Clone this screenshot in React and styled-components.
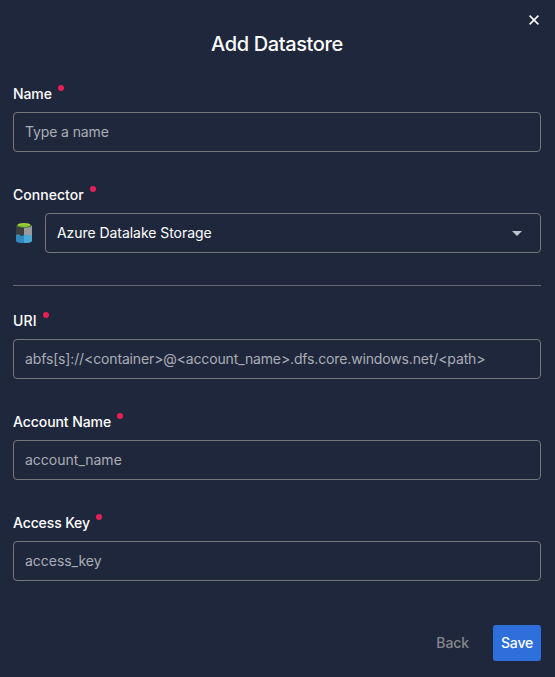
import React from "react";
import styled, { createGlobalStyle } from "styled-components";

const GlobalStyle = createGlobalStyle`
  *, *::before, *::after { box-sizing: border-box; }
  body { margin: 0; background: #1f273c; }
  input, button { font: inherit; letter-spacing: inherit; }
`;

const Dialog = styled.main`
  display: flex;
  flex-direction: column;
  height: 677px;
  padding: 12px 14px 16px 13px;
  background: #1f273c;
  color: #fff;
  font: 400 14px/20px Inter, sans-serif;
`;

const CloseButton = styled.button`
  display: flex;
  align-self: flex-end;
  width: 14px;
  height: 16px;
  padding: 3px 2px 3px 2px;
  border: 0;
  background: none;
  color: #fff;
`;

const Title = styled.h1`
  margin: 2px 0 0;
  height: 28px;
  font-size: 20px;
  line-height: 28px;
  font-weight: 500;
  letter-spacing: -0.38px;
  text-align: center;
`;

const Section = styled.section`
  display: flex;
  flex-direction: column;
  gap: 33px;
  margin-top: ${(p) => p.$top}px;
`;

const Field = styled.div`
  display: flex;
  flex-direction: column;
  gap: 8px;
`;

const Label = styled.label`
  display: flex;
  gap: 6px;
  height: 20px;
  font-weight: 500;
  letter-spacing: ${(p) => p.$tracking}px;
`;

const RequiredDot = styled.span`
  width: 6px;
  height: 6px;
  margin-top: 1px;
  border-radius: 50%;
  background: #e91e56;
`;

const Input = styled.input`
  width: 100%;
  height: 40px;
  padding: 0 11px 2px;
  border: 1px solid #77777a;
  border-radius: 4px;
  outline: 0;
  background: transparent;
  color: #fff;
  letter-spacing: ${(p) => p.$tracking}px;
  &::placeholder { color: #abadb5; opacity: 1; }
`;

const ConnectorRow = styled.div`
  display: flex;
  align-items: center;
  gap: 10px;
`;

const Select = styled.button`
  display: flex;
  flex: 1;
  align-items: center;
  justify-content: space-between;
  height: 40px;
  padding: 0 18px 0 11px;
  border: 1px solid #77777a;
  border-radius: 4px;
  background: transparent;
  color: #fff;
  letter-spacing: -0.05px;
`;

const Divider = styled.hr`
  width: 100%;
  height: 1px;
  margin: 32px 0 0;
  border: 0;
  background: #666a77;
`;

const Footer = styled.footer`
  display: flex;
  justify-content: flex-end;
  gap: 16px;
  margin-top: 44px;
`;

const Button = styled.button`
  height: 36px;
  padding: 0 8px;
  border: 0;
  border-radius: 3px;
  background: ${(p) => (p.$primary ? "#2f6fdb" : "transparent")};
  color: ${(p) => (p.$primary ? "#fff" : "#85878c")};
  font-weight: 500;
  letter-spacing: ${(p) => (p.$primary ? "-0.2px" : "-0.1px")};
`;

const DatalakeIcon = () => (
  <svg width="22" height="22" viewBox="0 0 22 22" aria-hidden="true">
    <path d="M3 3.5 11 5v10H3z" fill="#3c3f3f" />
    <path d="M11 5 19 3.5V15h-8z" fill="#9b9b9d" />
    <path d="M3 13q2-1.4 4 .3t4-.3v8q-8 0-8-2.3z" fill="#3289c2" />
    <path d="M11 13q2-1.4 4 0t4-.3v6q0 2.3-8 2.3z" fill="#4aaad5" />
    <ellipse cx="11" cy="3.7" rx="7.4" ry="2.3" fill="#45733d" />
    <ellipse cx="11" cy="2.9" rx="6.2" ry="1.9" fill="#a5d436" />
    <path d="M7 3.6q4-1 8 0" fill="none" stroke="#74b52d" strokeWidth="0.8" />
  </svg>
);

const RequiredField = ({ label, id, tracking = -0.03, children }) => (
  <Field>
    <Label htmlFor={id} $tracking={tracking}>{label}<RequiredDot /></Label>
    {children}
  </Field>
);

const TextField = ({ label, id, placeholder, tracking, labelTracking }) => (
  <RequiredField label={label} id={id} tracking={labelTracking}>
    <Input id={id} placeholder={placeholder} $tracking={tracking} />
  </RequiredField>
);

export default function App() {
  return (
    <>
      <GlobalStyle />
      <Dialog>
        <CloseButton aria-label="Close">
          <svg width="10" height="10" viewBox="0 0 10 10">
            <path d="M.6.6 9.4 9.4M9.4.6.6 9.4" stroke="currentColor" strokeWidth="1.5" />
          </svg>
        </CloseButton>
        <Title>Add Datastore</Title>
        <Section $top={26}>
          <TextField id="name" label="Name" labelTracking={-0.1} placeholder="Type a name" tracking={-0.12} />
          <RequiredField id="connector" label="Connector" tracking={0.03}>
            <ConnectorRow>
              <DatalakeIcon />
              <Select id="connector">
                Azure Datalake Storage
                <svg width="10" height="5" viewBox="0 0 10 5"><path d="M0 0h10L5 5z" fill="#c0c3c9" /></svg>
              </Select>
            </ConnectorRow>
          </RequiredField>
        </Section>
        <Divider />
        <Section $top={25}>
          <TextField id="uri" label="URI" labelTracking={0.14} placeholder="abfs[s]://<container>@<account_name>.dfs.core.windows.net/<path>" tracking={-0.14} />
          <TextField id="account" label="Account Name" labelTracking={-0.07} placeholder="account_name" tracking={0} />
          <TextField id="key" label="Access Key" labelTracking={-0.12} placeholder="access_key" tracking={-0.03} />
        </Section>
        <Footer>
          <Button>Back</Button>
          <Button $primary>Save</Button>
        </Footer>
      </Dialog>
    </>
  );
}
